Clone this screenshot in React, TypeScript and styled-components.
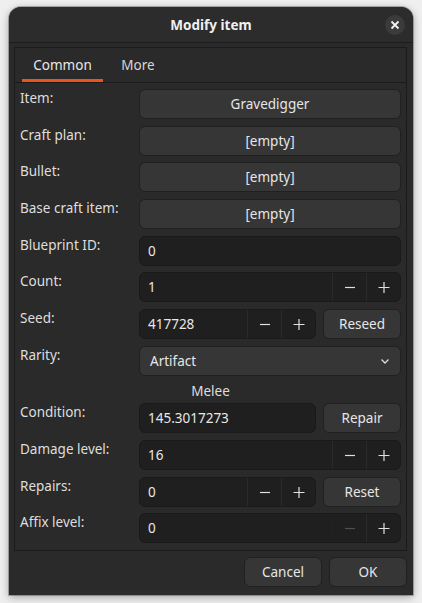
import React from 'react'
import styled, { createGlobalStyle } from 'styled-components'

const GlobalStyle = createGlobalStyle`
  html, body {
    margin: 0;
    padding: 0;
    background: #efefef;
  }
  body {
    font-family: "Noto Sans", "DejaVu Sans", sans-serif;
    font-size: 13.5px;
    color: #e2e2e2;
  }
`;

const Page = styled.div`
  height: 603px;
  padding: 7px 9px 0 9px;
  box-sizing: border-box;
`;

const Window = styled.div`
  width: 404px;
  height: 588px;
  background: #2a2a2a;
  border-radius: 12px 12px 0 0;
  box-shadow: 0 2px 8px rgba(0, 0, 0, 0.35), 0 0 0 1px rgba(0, 0, 0, 0.25);
  display: flex;
  flex-direction: column;
  overflow: hidden;
`;

const TitleBar = styled.div`
  height: 35px;
  flex: none;
  background: #2c2c2c;
  border-bottom: 1px solid #1c1c1c;
  display: grid;
  grid-template-columns: 1fr auto 1fr;
  align-items: center;
`;

const Title = styled.div`
  grid-column: 2;
  font-weight: 700;
  font-size: 13.5px;
  color: #f0f0f0;
`;

const CloseButton = styled.button`
  grid-column: 3;
  justify-self: end;
  margin-right: 8px;
  width: 20px;
  height: 20px;
  border-radius: 50%;
  border: none;
  background: #3b3b3b;
  padding: 0;
  display: flex;
  align-items: center;
  justify-content: center;
`;

const Body = styled.div`
  flex: 1;
  display: flex;
  flex-direction: column;
  padding: 4px 6px 7px 5px;
`;

const Frame = styled.div`
  border: 1px solid #1b1b1b;
  display: flex;
  flex-direction: column;
`;

const TabBar = styled.div`
  height: 34px;
  border-bottom: 1px solid #1b1b1b;
  display: flex;
  padding-left: 7px;
`;

const Tab = styled.div<{ $active?: boolean }>`
  width: ${p => (p.$active ? 81 : 70)}px;
  display: flex;
  align-items: center;
  justify-content: center;
  color: ${p => (p.$active ? '#e8e8e8' : '#d6d6d6')};
  font-size: 13.5px;
  border-bottom: 3px solid ${p => (p.$active ? '#e95420' : 'transparent')};
  box-sizing: border-box;
  padding-top: 3px;
`;

const Form = styled.div`
  display: grid;
  grid-template-columns: 119px 1fr;
  row-gap: 6.7px;
  padding: 6px 5px 7px 5px;
`;

const Label = styled.div`
  color: #dedede;
  line-height: 18px;
`;

const SectionTitle = styled.div`
  grid-column: 1 / 3;
  text-align: center;
  line-height: 14px;
  padding-top: 1px;
  margin-bottom: -1px;
  color: #dedede;
`;

const Button = styled.button<{ $width?: number; $align?: 'left' | 'center' }>`
  height: 30px;
  width: ${p => (p.$width ? `${p.$width}px` : '100%')};
  flex: none;
  box-sizing: border-box;
  background: #363636;
  border: 1px solid #202020;
  border-radius: 6px;
  color: #e6e6e6;
  font-family: inherit;
  font-size: 13.5px;
  padding: 0 10px;
  display: flex;
  align-items: center;
  justify-content: ${p => (p.$align === 'left' ? 'space-between' : 'center')};
`;

const Entry = styled.div<{ $width?: number }>`
  height: 30px;
  width: ${p => (p.$width ? `${p.$width}px` : '100%')};
  flex: none;
  box-sizing: border-box;
  background: #1f1f1f;
  border: 1px solid #1a1a1a;
  border-radius: 6px;
  display: flex;
  align-items: stretch;
  color: #e8e8e8;
`;

const EntryText = styled.div`
  flex: 1;
  display: flex;
  align-items: center;
  padding-left: 8px;
`;

const SpinButton = styled.div<{ $disabled?: boolean }>`
  width: 33px;
  border-left: 1px solid #2a2a2a;
  display: flex;
  align-items: center;
  justify-content: center;
  opacity: ${p => (p.$disabled ? 0.25 : 1)};
`;

const Line = styled.div`
  display: flex;
  gap: 7px;
`;

const Actions = styled.div`
  display: flex;
  justify-content: flex-end;
  gap: 7px;
  margin-top: 6px;
`;

const MinusIcon = () => (
  <svg width="12" height="12" viewBox="0 0 12 12">
    <path d="M1 6.5h10" stroke="#e0e0e0" strokeWidth="1.2" />
  </svg>
);

const PlusIcon = () => (
  <svg width="12" height="12" viewBox="0 0 12 12">
    <path d="M0.5 6.5h11M6 1v11" stroke="#e0e0e0" strokeWidth="1.2" />
  </svg>
);

const Chevron = () => (
  <svg width="10" height="10" viewBox="0 0 10 10">
    <path d="M1.5 3.5L5 7l3.5-3.5" stroke="#dcdcdc" strokeWidth="1.3" fill="none" />
  </svg>
);

const CloseIcon = () => (
  <svg width="10" height="10" viewBox="0 0 10 10">
    <path d="M1.5 1.5l7 7M8.5 1.5l-7 7" stroke="#f2f2f2" strokeWidth="1.8" />
  </svg>
);

function Spin({ value, width, minusDisabled }: { value: string; width?: number; minusDisabled?: boolean }) {
  return (
    <Entry $width={width}>
      <EntryText>{value}</EntryText>
      <SpinButton $disabled={minusDisabled}><MinusIcon /></SpinButton>
      <SpinButton><PlusIcon /></SpinButton>
    </Entry>
  );
}

export default function App() {
  return (
    <>
      <GlobalStyle />
      <Page>
        <Window>
          <TitleBar>
            <Title>Modify item</Title>
            <CloseButton aria-label="Close"><CloseIcon /></CloseButton>
          </TitleBar>
          <Body>
            <Frame>
              <TabBar>
                <Tab $active>Common</Tab>
                <Tab>More</Tab>
              </TabBar>
              <Form>
                <Label>Item:</Label>
                <Button>Gravedigger</Button>

                <Label>Craft plan:</Label>
                <Button>[empty]</Button>

                <Label>Bullet:</Label>
                <Button>[empty]</Button>

                <Label>Base craft item:</Label>
                <Button>[empty]</Button>

                <Label>Blueprint ID:</Label>
                <Entry><EntryText>0</EntryText></Entry>

                <Label>Count:</Label>
                <Spin value="1" />

                <Label>Seed:</Label>
                <Line>
                  <Spin value="417728" width={177} />
                  <Button $width={78}>Reseed</Button>
                </Line>

                <Label>Rarity:</Label>
                <Button $align="left">Artifact<Chevron /></Button>

                <SectionTitle>Melee</SectionTitle>

                <Label>Condition:</Label>
                <Line>
                  <Entry $width={177}><EntryText>145.3017273</EntryText></Entry>
                  <Button $width={78}>Repair</Button>
                </Line>

                <Label>Damage level:</Label>
                <Spin value="16" />

                <Label>Repairs:</Label>
                <Line>
                  <Spin value="0" width={177} />
                  <Button $width={78}>Reset</Button>
                </Line>

                <Label>Affix level:</Label>
                <Spin value="0" minusDisabled />
              </Form>
            </Frame>
            <Actions>
              <Button $width={78}>Cancel</Button>
              <Button $width={78}>OK</Button>
            </Actions>
          </Body>
        </Window>
      </Page>
    </>
  );
}
